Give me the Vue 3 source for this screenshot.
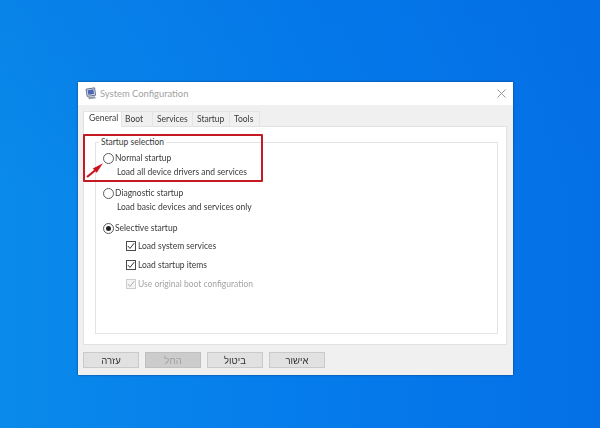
<script setup>
const tabs = [
  { label: 'General', cls: 't-general' },
  { label: 'Boot', cls: 't-boot' },
  { label: 'Services', cls: 't-services' },
  { label: 'Startup', cls: 't-startup' },
  { label: 'Tools', cls: 't-tools' },
]
const buttons = [
  { label: 'עזרה' },
  { label: 'החל', disabled: true },
  { label: 'ביטול' },
  { label: 'אישור' },
]
</script>

<template>
  <div class="desktop">
    <div class="dialog">
      <div class="titlebar">
        <svg class="appicon" width="12" height="13" viewBox="0 0 12 13">
          <path d="M1 2.2L9.6 .8l1 7.4-8.4 1.2z" fill="#d8dcea" stroke="#5b6284" stroke-width=".9" />
          <path d="M2.6 3.2l5.8-.9.6 4.6-5.7.8z" fill="#4d68b4" />
          <path d="M3 10.2l6.8-1 1.2 2-7 1z" fill="#9097ad" />
        </svg>
        <span class="title">System Configuration</span>
        <svg class="close" width="9" height="9" viewBox="0 0 9 9">
          <path d="M.5 .5l8 8M8.5 .5l-8 8" stroke="#8d8d8d" stroke-width=".9" fill="none" />
        </svg>
      </div>
      <div class="body">
        <div class="tabs">
          <div v-for="t in tabs" :key="t.label" class="tab" :class="t.cls">{{ t.label }}</div>
        </div>
        <div class="page">
          <div class="group">
            <div class="legend">Startup selection</div>
            <div class="option">
              <span class="radio"></span><span>Normal startup</span>
            </div>
            <div class="desc">Load all device drivers and services</div>
            <div class="option spaced">
              <span class="radio"></span><span>Diagnostic startup</span>
            </div>
            <div class="desc">Load basic devices and services only</div>
            <div class="option spaced">
              <span class="radio on"></span><span>Selective startup</span>
            </div>
            <div class="check c1">
              <svg class="box" width="10" height="10" viewBox="0 0 10 10">
                <rect x="0.5" y="0.5" width="9" height="9" fill="#fff" stroke="#4a4a4a" />
                <path d="M1.8 5l2.2 2.4L8.2 2.2" fill="none" stroke="#333" stroke-width="1" />
              </svg>
              <span>Load system services</span>
            </div>
            <div class="check">
              <svg class="box" width="10" height="10" viewBox="0 0 10 10">
                <rect x="0.5" y="0.5" width="9" height="9" fill="#fff" stroke="#4a4a4a" />
                <path d="M1.8 5l2.2 2.4L8.2 2.2" fill="none" stroke="#333" stroke-width="1" />
              </svg>
              <span>Load startup items</span>
            </div>
            <div class="check muted">
              <svg class="box" width="10" height="10" viewBox="0 0 10 10">
                <rect x="0.5" y="0.5" width="9" height="9" fill="#f4f4f4" stroke="#cdcdcd" />
                <path d="M1.8 5l2.2 2.4L8.2 2.2" fill="none" stroke="#b0b0b0" stroke-width="1" />
              </svg>
              <span>Use original boot configuration</span>
            </div>
          </div>
        </div>
        <div class="footer">
          <button v-for="b in buttons" :key="b.label" class="btn" :class="{ off: b.disabled }" dir="rtl">{{ b.label }}</button>
        </div>
      </div>
    </div>
    <div class="highlight"></div>
    <svg class="arrow" width="20" height="18" viewBox="0 0 20 18">
      <path d="M1 17L9 10.5" stroke="#cc1420" stroke-width="2.2" fill="none" />
      <path d="M17 3.2L6.8 8.4l3.9 4.4z" fill="#cc1420" />
    </svg>
  </div>
</template>

<style>
html, body { margin: 0; padding: 0; }
</style>

<style scoped>
.desktop {
  position: relative;
  width: 600px;
  height: 428px;
  box-sizing: border-box;
  padding: 82px 0 0 78px;
  overflow: hidden;
  background:
    linear-gradient(180deg, rgba(0, 100, 220, 0.18) 0%, rgba(0, 100, 220, 0) 45%),
    linear-gradient(90deg, #0a8aea 0%, #057cec 50%, #0570e6 100%);
  font-family: Lato, "Liberation Sans", sans-serif;
  font-size: 8.5px;
  color: #3a3a3a;
}
.dialog {
  width: 435px;
  height: 293px;
  background: #f0f0f0;
  box-shadow: 0 0 2px rgba(20, 50, 100, 0.85);
  display: flex;
  flex-direction: column;
  filter: blur(0.3px);
}
.titlebar {
  height: 23px;
  background: #fff;
  display: flex;
  align-items: center;
  padding: 0 7px 0 7px;
}
.appicon { margin-right: 3px; flex: none; margin-top: -1px; }
.title { font-size: 9.4px; color: #a2a2a2; flex: 1; }
.body {
  flex: 1;
  padding: 6px 6px 0 5px;
  display: flex;
  flex-direction: column;
}
.tabs { display: flex; height: 15px; align-items: flex-end; }
.tab {
  height: 15px;
  line-height: 15px;
  box-sizing: border-box;
  background: #f0f0f0;
  border: 1px solid #e4e4e4;
  border-bottom: 0;
  border-left: 0;
  white-space: nowrap;
}
.t-general {
  width: 39px;
  height: 16px;
  line-height: 13px;
  margin-bottom: -1px;
  padding-left: 5px;
  background: #fff;
  border-left: 1px solid #e0e0e0;
  position: relative;
}
.t-boot { width: 31px; padding-left: 3px; }
.t-services { width: 40px; padding-left: 4px; }
.t-startup { width: 37px; padding-left: 4px; }
.t-tools { width: 30px; padding-left: 4px; }
.page {
  height: 219px;
  background: #fff;
  border: 1px solid #e2e2e2;
  box-sizing: border-box;
  padding: 15px 8px 10px 11px;
}
.group {
  position: relative;
  height: 192px;
  box-sizing: border-box;
  border: 1px solid #e4e4e4;
  padding: 9px 0 0 7px;
}
.legend {
  position: absolute;
  top: -6px;
  left: 3px;
  background: #fff;
  padding: 0 2px;
  line-height: 11px;
}
.option { display: flex; align-items: center; height: 12px; line-height: 12px; }
.spaced { margin-top: 9px; }
.radio {
  width: 9px;
  height: 9px;
  border: 1px solid #5a5a5a;
  border-radius: 50%;
  margin-right: 1px;
  flex: none;
  position: relative;
  background: #fff;
}
.radio.on::after {
  content: "";
  position: absolute;
  inset: 2px;
  border-radius: 50%;
  background: #222;
}
.desc { margin: 2px 0 0 14px; line-height: 12px; height: 12px; }
.check {
  display: flex;
  align-items: center;
  height: 12px;
  line-height: 12px;
  margin: 7px 0 0 23px;
}
.c1 { margin-top: 6px; }
.box { margin-right: 2px; flex: none; }
.muted { color: #a4a4a4; }
.footer { display: flex; gap: 6px; padding-top: 7px; }
.btn {
  width: 56px;
  height: 16px;
  padding: 0;
  box-sizing: border-box;
  background: #e1e1e1;
  border: 1px solid #cacaca;
  font: 9.5px "Liberation Sans", "DejaVu Sans", sans-serif;
  color: #333;
}
.btn.off { background: #cccccc; border-color: #c0c0c0; color: #a0a0a0; }
.highlight {
  position: absolute;
  left: 83px;
  top: 134px;
  width: 180px;
  height: 48px;
  box-sizing: border-box;
  border: 2px solid #c41a24;
  border-radius: 1px;
}
.arrow { position: absolute; left: 86px; top: 160px; }
</style>
